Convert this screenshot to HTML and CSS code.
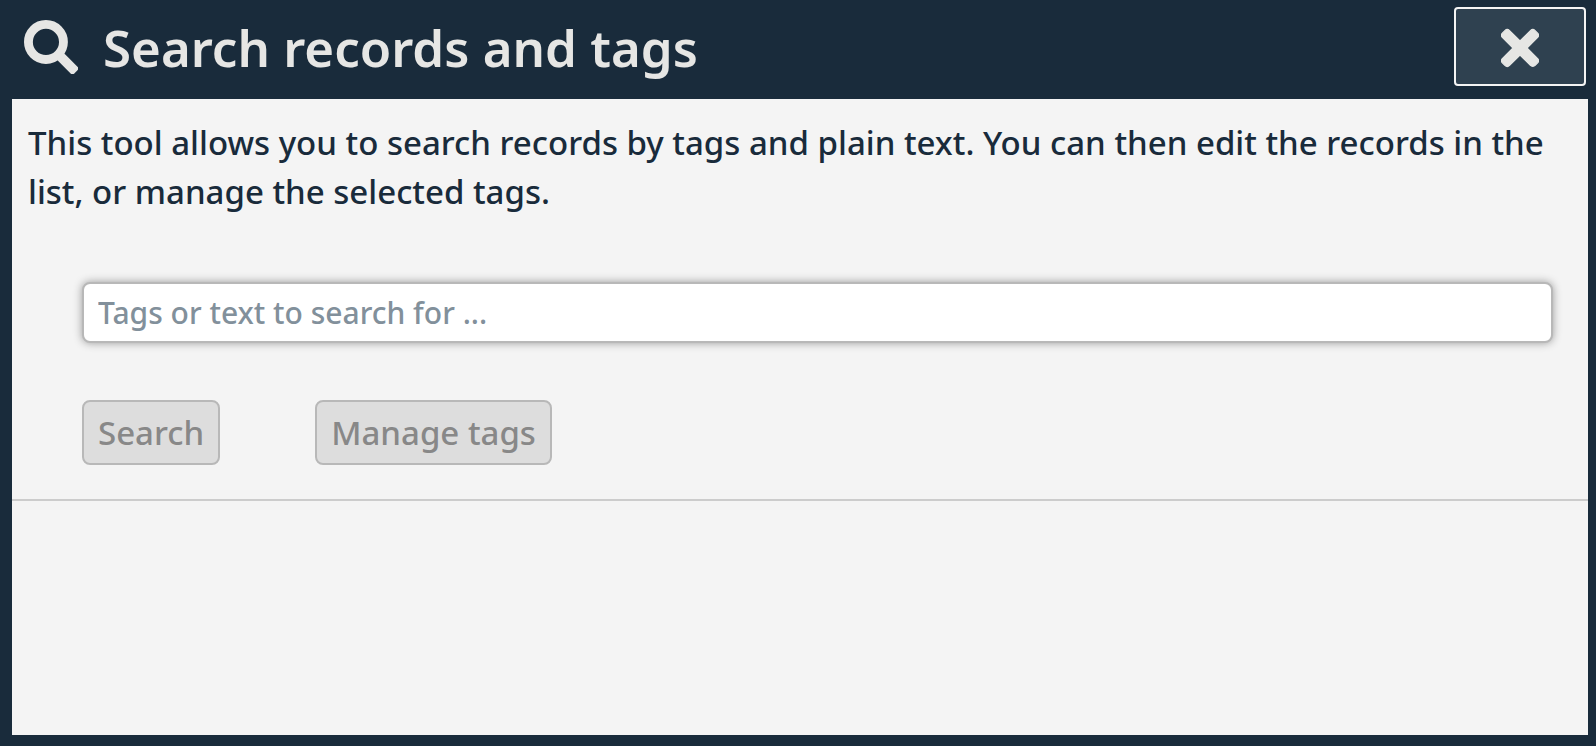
FILE: index.html
```
<!DOCTYPE html>
<html lang="en">
<head>
<meta charset="utf-8">
<meta name="viewport" content="width=device-width, initial-scale=1">
<title>Search records and tags</title>
<link rel="stylesheet" href="styles.css">
</head>
<body>
<main class="dialog">
  <header class="dialog-header">
    <svg class="icon icon-search" viewBox="0 0 512 512" aria-hidden="true"><circle cx="208" cy="208" r="166" fill="none" stroke="currentColor" stroke-width="84"/><rect x="480" y="-46" width="216" height="92" rx="28" fill="currentColor" transform="rotate(45)"/></svg>
    <h1 class="title">Search records and tags</h1>
    <button class="close" type="button" aria-label="Close">
      <svg class="icon icon-close" viewBox="-6 0 364 512" aria-hidden="true"><path fill="currentColor" stroke="currentColor" stroke-width="12" stroke-linejoin="round" d="M242.720 256l100.070-100.070c12.280-12.280 12.280-32.190 0-44.480l-22.240-22.240c-12.280-12.280-32.190-12.280-44.480 0L176 189.280 75.930 89.210c-12.280-12.280-32.190-12.280-44.480 0L9.210 111.450c-12.280 12.280-12.280 32.190 0 44.480L109.280 256 9.210 356.070c-12.280 12.280-12.280 32.190 0 44.480l22.240 22.240c12.280 12.280 32.200 12.280 44.480 0L176 322.720l100.070 100.070c12.280 12.280 32.200 12.280 44.480 0l22.240-22.240c12.280-12.280 12.280-32.190 0-44.480L242.720 256z"/></svg>
    </button>
  </header>
  <section class="content">
    <p class="intro">This tool allows you to search records by tags and plain text. You can then edit the records in the list, or manage the selected tags.</p>
    <form class="search-form">
      <input class="search-input" type="text" placeholder="Tags or text to search for ..." aria-label="Tags or text to search for">
      <div class="actions">
        <button class="action" type="submit" disabled>Search</button>
        <button class="action" type="button" disabled>Manage tags</button>
      </div>
    </form>
  </section>
</main>
</body>
</html>
```
FILE: styles.css
```
* {
  box-sizing: border-box;
}

body {
  margin: 0;
  background: #192b3b;
  color: #192b3b;
  font-family: "Noto Sans", "Open Sans", sans-serif;
  font-weight: 500;
}

.dialog {
  display: flex;
  flex-direction: column;
  min-height: 100vh;
  padding: 0 8px 11px 12px;
}

.dialog-header {
  display: flex;
  align-items: center;
  padding: 7px 2px 13px 12px;
  color: #e6e6e4;
}

.icon {
  display: block;
  height: 54px;
}

.icon-search {
  width: 54px;
}

.icon-close {
  width: 38px;
}

.title {
  flex: 1;
  margin: 0 0 0 25px;
  font-size: 51px;
  line-height: 64px;
  font-weight: 600;
}

.close {
  display: flex;
  align-items: center;
  justify-content: center;
  width: 132px;
  height: 79px;
  padding: 2px 0 0;
  border: 2px solid #f4f4f4;
  border-radius: 4px;
  background: #2f4150;
  color: inherit;
}

.content {
  flex: 1;
  background: #f4f4f4;
}

.intro {
  margin: 0;
  padding: 19px 16px 0;
  font-size: 33px;
  line-height: 49px;
}

.search-form {
  padding: 66px 35px 34px 70px;
  border-bottom: 2px solid #ccc;
}

.search-input {
  display: block;
  width: 100%;
  height: 61px;
  padding: 0 14px;
  border: 2px solid #b8b8b8;
  border-radius: 8px;
  background: #fff;
  box-shadow: 0 0 8px #999;
  color: #192b3b;
  font: inherit;
  font-size: 30px;
}

.search-input::placeholder {
  color: #82909b;
  opacity: 1;
}

.actions {
  display: flex;
  gap: 95px;
  margin-top: 57px;
}

.action {
  height: 65px;
  padding: 0 14px;
  border: 2px solid #b8b8b8;
  border-radius: 8px;
  background: #ddd;
  color: #888;
  font: inherit;
  font-size: 33px;
}
```
